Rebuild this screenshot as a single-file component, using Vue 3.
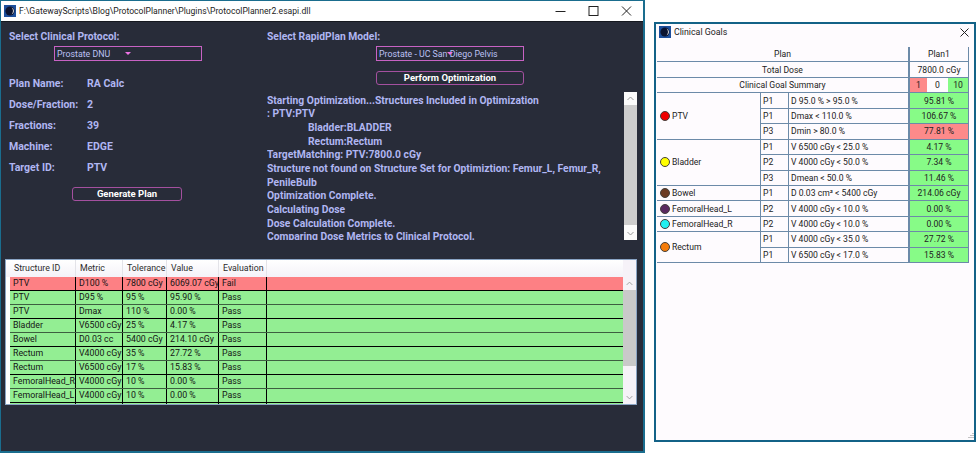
<script setup>
const planInfo = [
  ['Plan Name:', 'RA Calc'],
  ['Dose/Fraction:', '2'],
  ['Fractions:', '39'],
  ['Machine:', 'EDGE'],
  ['Target ID:', 'PTV'],
]

const logLines = [
  { text: 'Starting Optimization...Structures Included in Optimization' },
  { text: ': PTV:PTV' },
  { text: 'Bladder:BLADDER', indent: true },
  { text: 'Rectum:Rectum', indent: true },
  { text: 'TargetMatching: PTV:7800.0 cGy' },
  { text: 'Structure not found on Structure Set for Optimiztion: Femur_L, Femur_R,' },
  { text: 'PenileBulb' },
  { text: 'Optimization Complete.' },
  { text: 'Calculating Dose' },
  { text: 'Dose Calculation Complete.' },
  { text: 'Comparing Dose Metrics to Clinical Protocol.' },
]

const headers = ['Structure ID', 'Metric', 'Tolerance', 'Value', 'Evaluation']

const results = [
  ['PTV', 'D100 %', '7800 cGy', '6069.07 cGy', 'Fail'],
  ['PTV', 'D95 %', '95 %', '95.90 %', 'Pass'],
  ['PTV', 'Dmax', '110 %', '0.00 %', 'Pass'],
  ['Bladder', 'V6500 cGy', '25 %', '4.17 %', 'Pass'],
  ['Bowel', 'D0.03 cc', '5400 cGy', '214.10 cGy', 'Pass'],
  ['Rectum', 'V4000 cGy', '35 %', '27.72 %', 'Pass'],
  ['Rectum', 'V6500 cGy', '17 %', '15.83 %', 'Pass'],
  ['FemoralHead_R', 'V4000 cGy', '10 %', '0.00 %', 'Pass'],
  ['FemoralHead_L', 'V4000 cGy', '10 %', '0.00 %', 'Pass'],
  ['', '', '', '', ''],
]

const goals = [
  {
    name: 'PTV',
    color: '#f00000',
    rows: [
      ['P1', 'D 95.0 % > 95.0 %', '95.81 %'],
      ['P1', 'Dmax < 110.0 %', '106.67 %'],
      ['P3', 'Dmin > 80.0 %', '77.81 %', true],
    ],
  },
  {
    name: 'Bladder',
    color: '#ffff00',
    rows: [
      ['P1', 'V 6500 cGy < 25.0 %', '4.17 %'],
      ['P2', 'V 4000 cGy < 50.0 %', '7.34 %'],
      ['P3', 'Dmean < 50.0 %', '11.46 %'],
    ],
  },
  { name: 'Bowel', color: '#6b3a22', rows: [['P1', 'D 0.03 cm³ < 5400 cGy', '214.06 cGy']] },
  { name: 'FemoralHead_L', color: '#5a2a60', rows: [['P2', 'V 4000 cGy < 10.0 %', '0.00 %']] },
  { name: 'FemoralHead_R', color: '#22f0f0', rows: [['P2', 'V 4000 cGy < 10.0 %', '0.00 %']] },
  {
    name: 'Rectum',
    color: '#f57c0a',
    rows: [
      ['P1', 'V 4000 cGy < 35.0 %', '27.72 %'],
      ['P1', 'V 6500 cGy < 17.0 %', '15.83 %'],
    ],
  },
]
</script>

<template>
  <div class="page">
    <section class="planner">
      <header class="titlebar">
        <svg class="app-icon" viewBox="0 0 12 12">
          <rect width="12" height="12" fill="#1d4f9c" />
          <circle cx="6" cy="6" r="4.6" fill="#0c1430" />
          <path d="M7.5 2.6a3.6 3.6 0 0 1 0 6.8a4.6 4.6 0 0 0 0-6.8z" fill="#f2f2f2" />
        </svg>
        <span class="title-text">F:\GatewayScripts\Blog\ProtocolPlanner\Plugins\ProtocolPlanner2.esapi.dll</span>
        <div class="win-buttons">
          <svg viewBox="0 0 33 18"><path d="M11.5 9.5h10" stroke="#222" fill="none" /></svg>
          <svg viewBox="0 0 33 18"><rect x="12" y="4.5" width="9" height="9" stroke="#222" fill="none" /></svg>
          <svg viewBox="0 0 33 18"><path d="M12 4.5l9 9M21 4.5l-9 9" stroke="#222" fill="none" /></svg>
        </div>
      </header>

      <div class="top">
        <div class="protocol-col">
          <h2 class="heading">Select Clinical Protocol:</h2>
          <div class="combo protocol-combo">
            <span>Prostate DNU</span>
            <i class="caret"></i>
          </div>
          <div class="plan-info">
            <template v-for="item in planInfo" :key="item[0]">
              <span>{{ item[0] }}</span>
              <span>{{ item[1] }}</span>
            </template>
          </div>
          <button class="action generate">Generate Plan</button>
        </div>

        <div class="model-col">
          <h2 class="heading">Select RapidPlan Model:</h2>
          <div class="combo model-combo">
            <span>Prostate - UC San Diego Pelvis</span>
            <i class="caret"></i>
          </div>
          <button class="action optimize">Perform Optimization</button>
          <div class="log">
            <div class="log-text">
              <p v-for="(line, i) in logLines" :key="i" :class="{ indent: line.indent }">{{ line.text }}</p>
            </div>
            <div class="scrollbar log-scroll">
              <svg viewBox="0 0 13 13"><path d="M3.5 8l3-3 3 3" /></svg>
              <div class="thumb"></div>
              <svg viewBox="0 0 13 13"><path d="M3.5 5l3 3 3-3" /></svg>
            </div>
          </div>
        </div>
      </div>

      <div class="results">
        <div class="results-main">
          <div class="results-head">
            <span v-for="h in headers" :key="h" class="head-cell">{{ h }}</span>
          </div>
          <div class="results-body">
            <div
              v-for="(row, i) in results"
              :key="i"
              class="result-row"
              :class="{ fail: row[4] === 'Fail' }"
            >
              <span v-for="(cell, j) in row" :key="j" class="result-cell">{{ cell }}</span>
            </div>
          </div>
        </div>
        <div class="scrollbar results-scroll">
          <div class="scroll-corner"></div>
          <svg viewBox="0 0 14 13"><path d="M4 8l3-3 3 3" /></svg>
          <div class="thumb"></div>
          <svg viewBox="0 0 14 13"><path d="M4 5l3 3 3-3" /></svg>
        </div>
      </div>
    </section>

    <section class="goals">
      <header class="goals-title">
        <svg class="app-icon" viewBox="0 0 12 12">
          <rect width="12" height="12" fill="#1d4f9c" />
          <circle cx="6" cy="6" r="4.6" fill="#0c1430" />
          <path d="M7.5 2.6a3.6 3.6 0 0 1 0 6.8a4.6 4.6 0 0 0 0-6.8z" fill="#f2f2f2" />
        </svg>
        <span class="goals-name">Clinical Goals</span>
        <svg class="goals-close" viewBox="0 0 9 9"><path d="M.5.5l8 8M8.5.5l-8 8" stroke="#222" fill="none" /></svg>
      </header>

      <div class="goal-grid">
        <div class="gc span-3 center">Plan</div>
        <div class="gc center plan-col">Plan1</div>
        <div class="gc span-3 center">Total Dose</div>
        <div class="gc center plan-col">7800.0 cGy</div>
        <div class="gc span-3 center">Clinical Goal Summary</div>
        <div class="gc summary plan-col">
          <span class="s-red">1</span>
          <span>0</span>
          <span class="s-green">10</span>
        </div>
        <template v-for="goal in goals" :key="goal.name">
          <div class="gc structure" :style="{ gridRow: 'span ' + goal.rows.length }">
            <i class="dot" :style="{ background: goal.color }"></i>
            <span>{{ goal.name }}</span>
          </div>
          <template v-for="(row, i) in goal.rows" :key="i">
            <div class="gc">{{ row[0] }}</div>
            <div class="gc">{{ row[1] }}</div>
            <div class="gc center plan-col result" :class="{ bad: row[3] }">{{ row[2] }}</div>
          </template>
        </template>
      </div>

      <svg class="grip" viewBox="0 0 8 8">
        <path d="M7 1v1M5 3v1M7 3v1M3 5v1M5 5v1M7 5v1" stroke="#8a8a8a" fill="none" />
      </svg>
    </section>
  </div>
</template>

<style scoped>
.page {
  width: 980px;
  height: 460px;
  display: flex;
  align-items: flex-start;
  background: #ffffff;
  font-family: Roboto, "Open Sans", sans-serif;
  overflow: hidden;
}

.planner {
  width: 645px;
  height: 453px;
  flex: none;
  box-sizing: border-box;
  border: 1px solid #1a6d8e;
  border-width: 1px 2px 2px 1px;
  background: #282c39;
  display: flex;
  flex-direction: column;
}

.titlebar {
  height: 20px;
  flex: none;
  display: flex;
  align-items: center;
  padding-left: 3px;
  background: #ffffff;
  border-bottom: 1px solid #15181f;
}

.app-icon {
  width: 12px;
  height: 12px;
  flex: none;
}

.title-text {
  margin-left: 3px;
  font-size: 8.6px;
  color: #1c1c1c;
  white-space: nowrap;
}

.win-buttons {
  margin-left: auto;
  display: flex;
}

.win-buttons svg {
  width: 33px;
  height: 18px;
}

.top {
  height: 219px;
  flex: none;
  display: flex;
}

.protocol-col {
  width: 266px;
  flex: none;
  box-sizing: border-box;
  padding: 8px 0 0 8px;
}

.model-col {
  flex: 1;
  min-width: 0;
  padding-top: 8px;
}

.heading {
  margin: 0;
  height: 14px;
  font-size: 10.3px;
  line-height: 14px;
  font-weight: 700;
  color: #b0b6f2;
  white-space: nowrap;
}

.combo {
  width: 148px;
  height: 15px;
  margin-top: 2px;
  box-sizing: border-box;
  display: flex;
  align-items: center;
  padding-left: 2px;
  border: 1px solid #c862c4;
  font-size: 8.8px;
  color: #bcc1f4;
  white-space: nowrap;
}

.protocol-combo {
  margin-left: 45px;
}

.protocol-combo .caret {
  margin-left: 15px;
}

.model-combo {
  margin-left: 109px;
  position: relative;
}

.model-combo .caret {
  position: absolute;
  left: 70px;
  top: 5px;
}

.caret {
  width: 0;
  height: 0;
  border: 3px solid transparent;
  border-top: 3px solid #ee74e6;
  border-bottom: 0;
}

.plan-info {
  margin-top: 12px;
  display: grid;
  grid-template-columns: 78px 1fr;
  grid-auto-rows: 21px;
  align-items: center;
  font-size: 10.5px;
  font-weight: 700;
  color: #b0b6f2;
}

.action {
  display: block;
  padding: 0;
  box-sizing: border-box;
  background: transparent;
  border: 1px solid #a4509f;
  border-radius: 3px;
  font-family: inherit;
  font-size: 9.5px;
  font-weight: 700;
  color: #ffffff;
  white-space: nowrap;
}

.generate {
  width: 110px;
  height: 14px;
  margin: 9px 0 0 63px;
  line-height: 12px;
}

.optimize {
  width: 148px;
  height: 14px;
  margin: 10px 0 0 109px;
  line-height: 12px;
}

.log {
  height: 148px;
  margin-top: 7px;
  display: flex;
  overflow: hidden;
}

.log-text {
  width: 357px;
  flex: none;
  padding-top: 1.5px;
  font-size: 10.3px;
  font-weight: 700;
  color: #b0b6f2;
}

.log-text p {
  margin: 0;
  height: 13.7px;
  line-height: 13.7px;
  white-space: nowrap;
}

.log-text p.indent {
  padding-left: 41px;
}

.scrollbar {
  display: flex;
  flex-direction: column;
  flex: none;
}

.scrollbar svg {
  flex: none;
  width: 100%;
  height: 13px;
  fill: none;
  stroke: #9a9a9a;
}

.log-scroll {
  width: 13px;
  background: #fbfbfb;
}

.log-scroll .thumb {
  height: 120px;
  margin-bottom: 2px;
  background: #cdcdcd;
}

.results {
  width: 632px;
  height: 146px;
  margin: 18px 0 0 4px;
  box-sizing: border-box;
  display: flex;
  border: 1px solid #8aa4c4;
  background: #ffffff;
  overflow: hidden;
}

.results-main {
  flex: 1;
  min-width: 0;
}

.results-head {
  height: 17px;
  box-sizing: border-box;
  padding-left: 4px;
  display: grid;
  grid-template-columns: 66px 47px 44px 52px 48px;
  background: linear-gradient(#ffffff, #f4f2f8);
}

.head-cell {
  padding-left: 4px;
  font-size: 8.8px;
  line-height: 17px;
  color: #2c2c2c;
  border-right: 1px solid #e3e3e8;
  white-space: nowrap;
}

.results-body {
  padding-left: 4px;
}

.result-row {
  height: 14px;
  box-sizing: border-box;
  display: grid;
  grid-template-columns: 66px 47px 44px 52px 48px 1fr;
  background: #93ee93;
  border-bottom: 1px solid #000000;
}

.result-row:nth-child(even) {
  border-bottom-color: #3d5f40;
}

.result-row.fail {
  background: #fd8084;
}

.result-cell {
  padding-left: 3px;
  font-size: 8.8px;
  line-height: 13px;
  color: #141414;
  border-right: 1px solid #000000;
  white-space: nowrap;
  overflow: hidden;
}

.results-scroll {
  width: 13px;
  background: #f6f2f8;
}

.scroll-corner {
  height: 17px;
  flex: none;
}

.results-scroll .thumb {
  height: 76px;
  flex: none;
  background: #c9c9c9;
}

.results-scroll svg:last-child {
  margin-top: auto;
}

.goals {
  width: 322px;
  height: 420px;
  flex: none;
  position: relative;
  margin: 22px 0 0 9px;
  box-sizing: border-box;
  border: 2px solid #136287;
  background: #fefbfe;
}

.goals-title {
  height: 16px;
  margin-bottom: 7px;
  display: flex;
  align-items: center;
  padding-left: 3px;
}

.goals-name {
  margin-left: 3px;
  font-size: 8.8px;
  color: #222222;
}

.goals-close {
  width: 9px;
  height: 9px;
  margin-left: auto;
  margin-right: 5px;
}

.goal-grid {
  width: 312px;
  margin-left: 1px;
  display: grid;
  grid-template-columns: 104px 28px 120px 60px;
  grid-auto-rows: 15.45px;
  font-size: 8.6px;
  color: #222222;
}

.gc {
  min-width: 0;
  box-sizing: border-box;
  display: flex;
  align-items: center;
  padding-left: 2px;
  border-right: 1px solid #6c8aa8;
  border-bottom: 1px solid #6c8aa8;
  white-space: nowrap;
}

.center {
  justify-content: center;
  padding-left: 0;
}

.span-3 {
  grid-column: span 3;
}

.plan-col {
  border-left: 1px solid #6c8aa8;
}

.summary {
  padding: 0;
  display: grid;
  grid-template-columns: 17px 21px 1fr;
  text-align: center;
}

.summary span {
  height: 100%;
  line-height: 14px;
}

.s-red {
  background: #fd8a8a;
}

.s-green {
  background: #87fb87;
}

.result {
  background: #87fb87;
}

.result.bad {
  background: #fd8a8a;
}

.structure {
  gap: 2px;
  padding-left: 3px;
}

.dot {
  width: 10px;
  height: 10px;
  flex: none;
  box-sizing: border-box;
  border: 1px solid #44403c;
  border-radius: 50%;
}

.grip {
  position: absolute;
  right: 0;
  bottom: 0;
  width: 8px;
  height: 8px;
}
</style>
